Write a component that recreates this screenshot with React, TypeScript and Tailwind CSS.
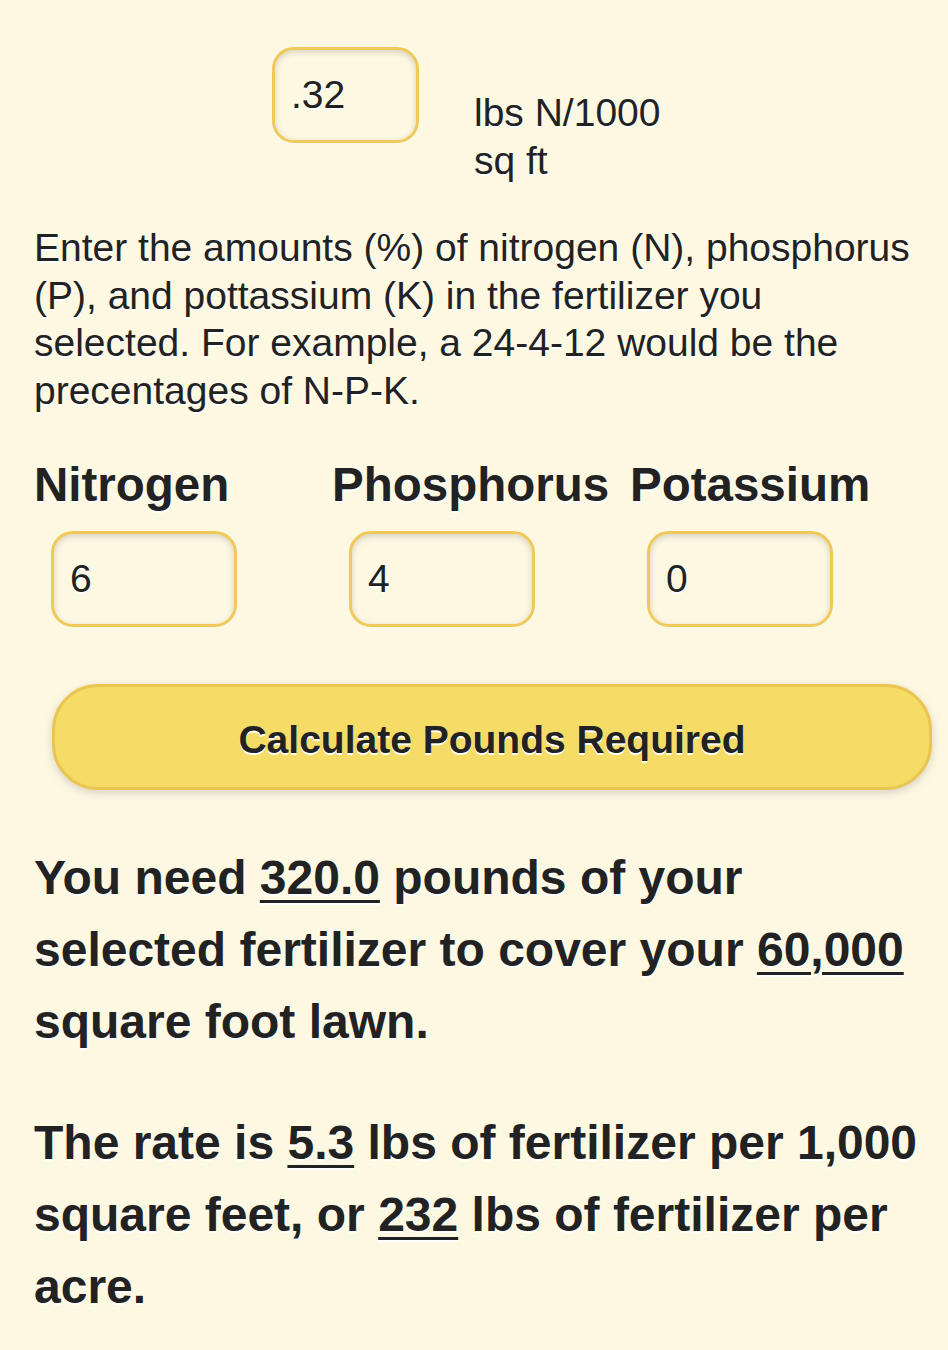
export default function App() {
  const shadow = "[text-shadow:0_2px_0_#fff]";
  const field =
    "h-[96px] rounded-[22px] border-[3px] border-[#efc95a] bg-[#fdf8e2] px-[16px] text-[39px] text-[#222] shadow-[inset_0_2px_6px_rgba(0,0,0,0.16)] outline-none " +
    shadow;
  const num = "underline decoration-[3px] underline-offset-[6px]";

  return (
    <div className="min-h-[1350px] bg-[#fdf8e2] pl-[34px] pr-[16px] pt-[47px] font-['Liberation_Sans',Arial,sans-serif] text-[#222]">
      <div className="flex items-start pl-[238px]">
        <input type="text" defaultValue=".32" className={"w-[147px] " + field} />
        <div className={"ml-[55px] mt-[42px] w-[200px] text-[39px] leading-[48px] " + shadow}>
          lbs N/1000 sq ft
        </div>
      </div>

      <p className={"mt-[39px] w-[890px] text-[39px] leading-[47.5px] " + shadow}>
        Enter the amounts (%) of nitrogen (N), phosphorus (P), and pottassium (K) in the fertilizer you selected. For
        example, a 24-4-12 would be the precentages of N-P-K.
      </p>

      <div className="mt-[42px] flex">
        {[
          { label: "Nitrogen", value: "6" },
          { label: "Phosphorus", value: "4" },
          { label: "Potassium", value: "0" },
        ].map(({ label, value }) => (
          <div key={label} className="w-[298px]">
            <h3 className={"text-[47.5px] font-bold leading-[57px] " + shadow}>{label}</h3>
            <input type="text" defaultValue={value} className={"ml-[17px] mt-[18px] w-[186px] " + field} />
          </div>
        ))}
      </div>

      <button
        type="button"
        className={
          "ml-[18px] mt-[57px] h-[106px] w-[880px] rounded-[46px] border-[3px] border-[#ebc552] bg-[#f5dc66] pt-[6px] text-[39px] font-bold text-[#222] shadow-[0_3px_10px_rgba(0,0,0,0.15)] " +
          shadow
        }
      >
        Calculate Pounds Required
      </button>

      <p className={"mt-[52px] w-[890px] text-[48px] font-bold leading-[72px] " + shadow}>
        You need <span className={num}>320.0</span> pounds of your selected fertilizer to cover your{" "}
        <span className={num}>60,000</span> square foot lawn.
      </p>

      <p className={"mt-[49px] w-[890px] text-[48px] font-bold leading-[72px] " + shadow}>
        The rate is <span className={num}>5.3</span> lbs of fertilizer per 1,000 square feet, or{" "}
        <span className={num}>232</span> lbs of fertilizer per acre.
      </p>
    </div>
  );
}
